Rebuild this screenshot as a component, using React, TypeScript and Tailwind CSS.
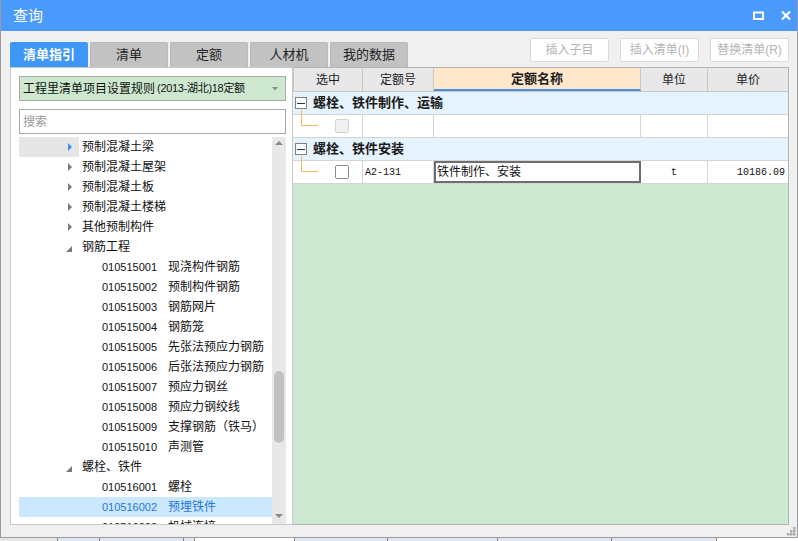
import React from "react";

const FONT = "font-['Liberation_Sans','Noto_Sans_CJK_SC',sans-serif]";
const MONO = "font-['Liberation_Mono','Noto_Sans_CJK_SC',monospace]";

type TreeRow =
  | { kind: "folder"; label: string; open?: boolean; hover?: boolean; active?: boolean }
  | { kind: "item"; code: string; label: string; selected?: boolean };

const tree: TreeRow[] = [
  { kind: "folder", label: "预制混凝土梁", hover: true, active: true },
  { kind: "folder", label: "预制混凝土屋架" },
  { kind: "folder", label: "预制混凝土板" },
  { kind: "folder", label: "预制混凝土楼梯" },
  { kind: "folder", label: "其他预制构件" },
  { kind: "folder", label: "钢筋工程", open: true },
  { kind: "item", code: "010515001", label: "现浇构件钢筋" },
  { kind: "item", code: "010515002", label: "预制构件钢筋" },
  { kind: "item", code: "010515003", label: "钢筋网片" },
  { kind: "item", code: "010515004", label: "钢筋笼" },
  { kind: "item", code: "010515005", label: "先张法预应力钢筋" },
  { kind: "item", code: "010515006", label: "后张法预应力钢筋" },
  { kind: "item", code: "010515007", label: "预应力钢丝" },
  { kind: "item", code: "010515008", label: "预应力钢绞线" },
  { kind: "item", code: "010515009", label: "支撑钢筋（铁马）" },
  { kind: "item", code: "010515010", label: "声测管" },
  { kind: "folder", label: "螺栓、铁件", open: true },
  { kind: "item", code: "010516001", label: "螺栓" },
  { kind: "item", code: "010516002", label: "预埋铁件", selected: true },
  { kind: "item", code: "010516003", label: "机械连接" },
];

function TitleBar() {
  return (
    <div className="h-[31px] shrink-0 flex items-center bg-[#4a9bfd] pl-[12px] pr-[6px] text-white">
      <span className="text-[15px] leading-none">查询</span>
      <div className="ml-auto flex items-center gap-[17px]">
        <svg width="11" height="9" viewBox="0 0 11 9">
          <rect x="1" y="1.5" width="9" height="6.5" fill="none" stroke="#fff" strokeWidth="2" />
        </svg>
        <svg width="10" height="9" viewBox="0 0 10 9">
          <path d="M1 0.5 L9 8.5 M9 0.5 L1 8.5" stroke="#fff" strokeWidth="2.2" />
        </svg>
      </div>
    </div>
  );
}

function Toolbar() {
  const tabs = ["清单指引", "清单", "定额", "人材机", "我的数据"];
  const buttons = ["插入子目", "插入清单(I)", "替换清单(R)"];
  return (
    <div className="h-[36px] shrink-0 flex pl-[9px] pr-[8px]">
      <div className="self-end flex gap-[2px]">
        {tabs.map((t, i) =>
          i === 0 ? (
            <div
              key={t}
              className="w-[78px] h-[25px] flex items-center justify-center rounded-t-[2px] bg-[#3e96f6] text-white text-[13px] font-bold"
            >
              {t}
            </div>
          ) : (
            <div
              key={t}
              className="w-[78px] h-[25px] flex items-center justify-center rounded-t-[2px] bg-[#c2c2c2] border border-b-0 border-[#b8b8b8] text-[#222] text-[13px]"
            >
              {t}
            </div>
          )
        )}
      </div>
      <div className="ml-auto pt-[7px] flex gap-[11px]">
        {buttons.map((b) => (
          <div
            key={b}
            className="w-[79px] h-[24px] flex items-center justify-center rounded-[2px] bg-white border border-[#dadada] text-[#b4b4b4] text-[12px]"
          >
            {b}
          </div>
        ))}
      </div>
    </div>
  );
}

function Arrow({ row }: { row: TreeRow & { kind: "folder" } }) {
  if (row.open) {
    return (
      <svg width="6" height="6" viewBox="0 0 6 6" className="mt-[4px]">
        <path d="M6 0 L6 6 L0 6 Z" fill="#7a7a7a" />
      </svg>
    );
  }
  return (
    <svg width="4" height="8" viewBox="0 0 4 8">
      <path d="M0 0 L4 4 L0 8 Z" fill={row.active ? "#3d8ff0" : "#7a7a7a"} />
    </svg>
  );
}

function LeftPanel() {
  return (
    <div className="w-[283px] shrink-0 flex flex-col bg-white border border-[#c8c8c8]">
      <div className="pl-[8px] pt-[8px]">
        <div className="w-[267px] h-[25px] flex items-center bg-[#cde8cf] border border-[#a8a8a8] pl-[3px] pr-[7px] text-[12px] text-[#111]">
          <span>工程里清单项目设置规则</span>
          <span className="text-[11px] ml-[2px] tracking-[-0.3px]">(2013-湖北)18定额</span>
          <svg width="6" height="4" viewBox="0 0 6 4" className="ml-auto">
            <path d="M0 0 L6 0 L3 3.5 Z" fill="#8a8a8a" />
          </svg>
        </div>
        <div className="mt-[8px] w-[267px] h-[25px] flex items-center bg-white border border-[#a8a8a8] pl-[3px] text-[12px] text-[#9a9a9a]">
          搜索
        </div>
      </div>
      <div className="mt-[3px] flex-1 flex pl-[8px] pr-[6px] overflow-hidden">
        <div className="w-[253px] overflow-hidden">
          {tree.map((row, i) =>
            row.kind === "folder" ? (
              <div key={i} className="h-[20px] flex items-center text-[12px] text-[#111]">
                <div
                  className={`w-[60px] h-[20px] flex items-center justify-end pr-[7px] ${
                    row.hover ? "bg-[#e6e6e6]" : ""
                  }`}
                >
                  <Arrow row={row} />
                </div>
                <span className="ml-[3px]">{row.label}</span>
              </div>
            ) : (
              <div
                key={i}
                className={`h-[20px] shrink-0 flex items-center pl-[83px] ${
                  row.selected ? "bg-[#cce8ff] text-[#1f77dd]" : "text-[#111]"
                }`}
              >
                <span className="w-[66px] text-[11px]">{row.code}</span>
                <span className="text-[12px]">{row.label}</span>
              </div>
            )
          )}
        </div>
        <div className="w-[14px] flex flex-col bg-[#e8e8e8]">
          <div className="h-[12px] flex items-center justify-center">
            <svg width="8" height="4" viewBox="0 0 8 4">
              <path d="M0 4 L4 0 L8 4 Z" fill="#8a8a8a" />
            </svg>
          </div>
          <div className="flex-1 flex flex-col items-center">
            <div className="h-[222px]" />
            <div className="w-[10px] h-[72px] rounded-full bg-[#c2c2c2]" />
          </div>
          <div className="h-[10px] flex items-start justify-center">
            <svg width="8" height="4" viewBox="0 0 8 4">
              <path d="M0 0 L8 0 L4 4 Z" fill="#8a8a8a" />
            </svg>
          </div>
        </div>
      </div>
    </div>
  );
}

const COLS = "grid grid-cols-[70px_71px_207px_67px_1fr]";

function GroupRow({ label }: { label: string }) {
  return (
    <div className="h-[23px] flex items-center bg-[#e5f3ff] border-b border-[#d4d4d4] pl-[2px] relative">
      <div className="w-[12px] h-[12px] flex items-center justify-center border border-[#808080] bg-white">
        <div className="w-[8px] h-[1px] bg-[#333]" />
      </div>
      <span className="ml-[6px] text-[13px] font-bold text-[#1a1a1a]">{label}</span>
      <svg width="2" height="5" viewBox="0 0 2 5" className="absolute left-[8px] bottom-[-1px]">
        <path d="M0.5 0 L0.5 5" stroke="#f2b866" strokeWidth="1" />
      </svg>
    </div>
  );
}

function Connector() {
  return (
    <svg width="26" height="12" viewBox="0 0 26 12" className="absolute left-0 top-0">
      <path d="M8.5 0 L8.5 10.5 L25 10.5" fill="none" stroke="#f2b866" strokeWidth="1" />
    </svg>
  );
}

function DataRow({
  code,
  name,
  unit,
  price,
  disabled,
}: {
  code?: string;
  name?: string;
  unit?: string;
  price?: string;
  disabled?: boolean;
}) {
  const cell = "border-r border-[#d4d4d4] h-full flex items-center";
  return (
    <div className={`${COLS} h-[23px] bg-white border-b border-[#d4d4d4]`}>
      <div className={`${cell} relative pl-[42px]`}>
        <Connector />
        <div
          className={`w-[14px] h-[14px] rounded-[2px] border ${
            disabled ? "bg-[#f0f0f0] border-[#d2d2d2]" : "bg-white border-[#8c8c8c]"
          }`}
        />
      </div>
      <div className={`${cell} pl-[2px] text-[10px] text-[#111] ${MONO}`}>{code}</div>
      {name ? (
        <div className="h-full flex items-center border-2 border-[#6e6e6e] pl-[1px] text-[12px] text-[#111]">
          {name}
        </div>
      ) : (
        <div className={cell} />
      )}
      <div className={`${cell} justify-center text-[10px] text-[#111] ${MONO}`}>{unit}</div>
      <div className={`h-full flex items-center justify-end pr-[3px] text-[10px] text-[#111] ${MONO}`}>
        {price}
      </div>
    </div>
  );
}

function RightPanel() {
  const head = "border-r border-[#c8c8c8] h-full flex items-center justify-center text-[12px] text-[#222]";
  return (
    <div className="flex-1 flex flex-col border border-l-0 border-[#b4b4b4] bg-[#cde8d0]">
      <div className={`${COLS} h-[24px] bg-[#e8e8e8] border-b border-[#c8c8c8]`}>
        <div className={`${head} border-l`}>选中</div>
        <div className={head}>定额号</div>
        <div className={`${head} bg-[#ffe7cb] font-bold text-[13px] border-b-2 border-b-[#4a90e2]`}>定额名称</div>
        <div className={head}>单位</div>
        <div className="h-full flex items-center justify-center text-[12px] text-[#222]">单价</div>
      </div>
      <GroupRow label="螺栓、铁件制作、运输" />
      <DataRow disabled />
      <GroupRow label="螺栓、铁件安装" />
      <DataRow code="A2-131" name="铁件制作、安装" unit="t" price="10186.09" />
    </div>
  );
}

function Grip() {
  return (
    <svg width="9" height="9" viewBox="0 0 9 9">
      {[
        [6, 0],
        [3, 3],
        [6, 3],
        [0, 6],
        [3, 6],
        [6, 6],
      ].map(([x, y], i) => (
        <rect key={i} x={x} y={y} width="2.5" height="2.5" fill="#a8a8a8" />
      ))}
    </svg>
  );
}

export default function App() {
  return (
    <div className={`w-[798px] h-[541px] overflow-hidden bg-[#dfe7f3] ${FONT}`}>
      <div className="h-[538px] flex flex-col bg-[#f0f0f0] border-x border-b border-[#9c9c9c]">
        <TitleBar />
        <Toolbar />
        <div className="h-[458px] shrink-0 flex pl-[9px] pr-[8px]">
          <LeftPanel />
          <RightPanel />
        </div>
        <div className="flex-1 flex justify-end items-end pr-[1px] pb-[1px]">
          <Grip />
        </div>
      </div>
      <div className="h-[3px] flex">
        <div className="w-[57px] bg-[#e6e6e6]" />
        <div className="w-[42px] border-l border-[#888]" />
        <div className="w-[84px] border-l border-[#888]" />
        <div className="w-[11px] border-l border-[#888]" />
        <div className="w-[100px] border-l border-[#888] bg-white" />
        <div className="w-[93px] border-l border-[#888]" />
        <div className="w-[110px] border-l border-[#888]" />
        <div className="w-[114px] border-l border-[#888]" />
        <div className="w-[105px] border-l border-[#888]" />
        <div className="flex-1 border-l border-[#888] bg-white" />
      </div>
    </div>
  );
}
